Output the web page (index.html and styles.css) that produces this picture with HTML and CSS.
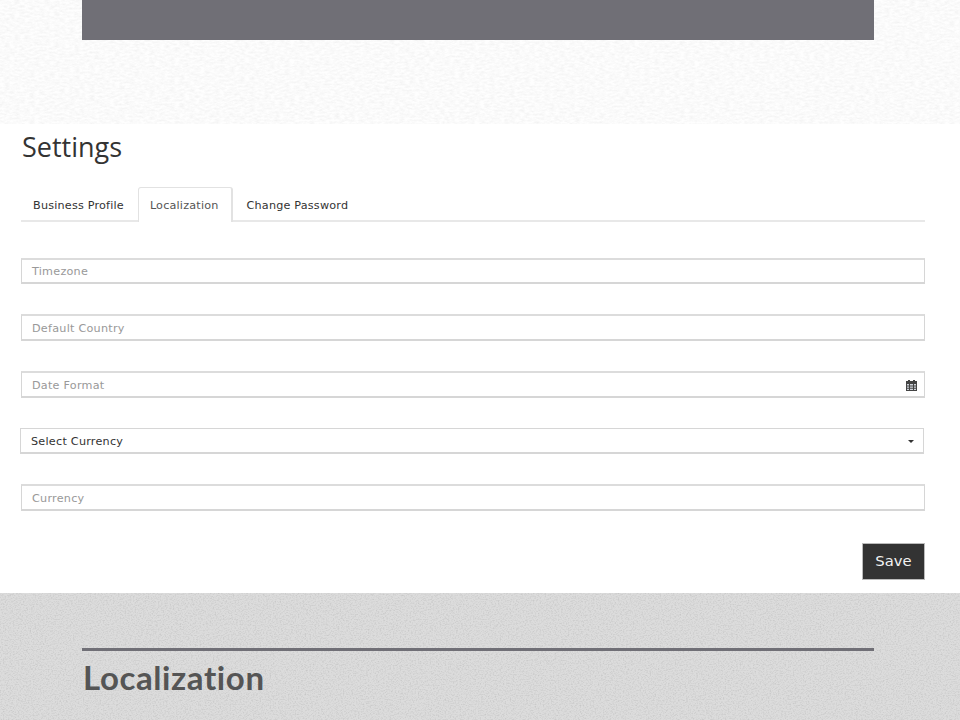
FILE: index.html
```html
<!DOCTYPE html>
<html lang="en">
<head>
<meta charset="utf-8">
<title>Settings - Localization</title>
<link rel="stylesheet" href="styles.css">
</head>
<body>
<svg class="defs" width="0" height="0" aria-hidden="true">
  <filter id="paper-light" x="0" y="0" width="100%" height="100%">
    <feTurbulence type="fractalNoise" baseFrequency="0.2 0.5" numOctaves="3" seed="4"/>
    <feColorMatrix type="matrix" values="0 0 0 0 0  0 0 0 0 0  0 0 0 0 0  0.08 0 0 0 -0.026"/>
  </filter>
  <filter id="paper-dark" x="0" y="0" width="100%" height="100%">
    <feTurbulence type="fractalNoise" baseFrequency="0.6 0.8" numOctaves="2" seed="9"/>
    <feColorMatrix type="matrix" values="0 0 0 0 0.45  0 0 0 0 0.45  0 0 0 0 0.45  1.1 0 0 0 -0.47"/>
  </filter>
</svg>
<header class="top">
  <svg class="texture" width="100%" height="100%" aria-hidden="true"><rect class="tex-light" width="100%" height="100%"/></svg>
  <div class="top-bar"></div>
</header>
<main class="panel">
  <h1 class="title">Settings</h1>
  <nav class="tabs">
    <a class="tab">Business Profile</a>
    <a class="tab tab-active">Localization</a>
    <a class="tab">Change Password</a>
  </nav>
  <form class="form">
    <div class="field">Timezone</div>
    <div class="field">Default Country</div>
    <div class="field field-icon">
      <span>Date Format</span>
      <svg class="cal" width="11" height="12" viewBox="0 0 11 12" aria-hidden="true">
        <path fill="#444" d="M0 2h2V1h2v1h3V1h2v1h2v10H0z"/>
        <path fill="#cfd3da" d="M1 5h2v1.4H1zM4 5h3v1.4H4zM8 5h2v1.4H8zM1 7.4h2v1.4H1zM4 7.4h3v1.4H4zM8 7.4h2v1.4H8zM1 9.8h2V11H1zM4 9.8h3V11H4zM8 9.8h2V11H8z"/>
      </svg>
    </div>
    <div class="field field-select">
      <span>Select Currency</span>
      <span class="caret"></span>
    </div>
    <div class="field">Currency</div>
    <div class="actions"><button class="save" type="button">Save</button></div>
  </form>
</main>
<footer class="bottom">
  <svg class="texture" width="100%" height="100%" aria-hidden="true"><rect class="tex-dark" width="100%" height="100%"/></svg>
  <div class="caption">Localization</div>
</footer>
</body>
</html>
```
FILE: styles.css
```css
html, body { margin: 0; padding: 0; }
body { width: 960px; height: 720px; overflow: hidden; background: #fff; font-family: "DejaVu Sans", sans-serif; }
.defs { position: absolute; }
.top { position: relative; height: 124px; background: #fefefe; padding: 0 86px 0 82px; box-sizing: border-box; }
.texture { position: absolute; inset: 0; display: block; }
.tex-light { filter: url(#paper-light); }
.tex-dark { filter: url(#paper-dark); }
.top-bar { position: relative; height: 40px; background: #706f76; }
.panel { height: 469px; box-sizing: border-box; padding: 0 35px 0 21px; background: #fff; }
.title { margin: 0; padding: 6px 0 0 1px; height: 63px; box-sizing: border-box; font: 400 27px/34px "Open Sans", sans-serif; color: #333; }
.tabs { display: flex; gap: 2px; height: 33px; border-bottom: 2px solid #e8e8e8; }
.tab { box-sizing: border-box; height: 34px; padding: 10px 11px 0; font-size: 11.2px; letter-spacing: 0.2px; line-height: 16px; color: #333; border: 1px solid transparent; border-bottom: 0; }
.tab-active { height: 35px; padding-right: 12px; background: #fff; color: #555; border-color: #e2e2e2; border-width: 1px 2px 0 1px; border-radius: 3px 3px 0 0; }
.form { display: flex; flex-direction: column; gap: 30.1px; padding-top: 35.6px; }
.field { box-sizing: border-box; height: 26.6px; padding: 2px 10px 0; display: flex; align-items: center; justify-content: space-between; border: 1px solid #d6d6d6; border-top: 2px solid #dcdcdc; border-bottom-width: 2px; font-size: 11.2px; letter-spacing: 0.25px; color: #999; background: #fff; }
.field-select { color: #333; margin: 0 1px 0 -1px; border: 1px solid #d6d6d6; border-bottom-width: 2px; }
.field-icon { padding-right: 7px; }
.cal { display: block; }
.caret { width: 0; height: 0; border: 3px solid transparent; border-top-color: #333; border-bottom: 0; margin-right: -1px; }
.actions { display: flex; justify-content: flex-end; margin-top: 2px; }
.save { width: 63px; height: 37px; padding: 0 0 2px; background: #333; color: #f2f2f2; border: 1px solid #bbb; font: 400 14.8px "DejaVu Sans", sans-serif; }
.bottom { position: relative; height: 127px; box-sizing: border-box; padding: 55px 86px 0 82px; background: #dcdcdc; }
.caption { position: relative; border-top: 3px solid #706f76; padding: 7px 0 0 1px; font: 700 33px/38px "Lato", sans-serif; letter-spacing: 0.6px; font-variant-ligatures: none; color: #555; }
```
